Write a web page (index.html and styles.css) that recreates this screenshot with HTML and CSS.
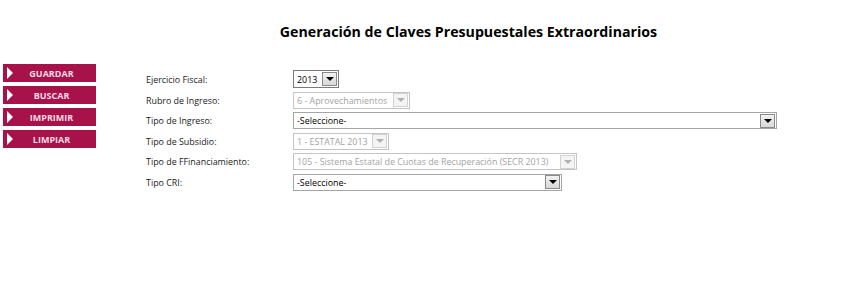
FILE: index.html
```html
<!DOCTYPE html>
<html lang="es">
<head>
    <meta charset="UTF-8">
    <title>Generación de Claves Presupuestales Extraordinarios</title>
    <link rel="stylesheet" href="styles.css">
</head>
<body>
    <div class="page">
        <!-- menu lateral -->
        <div class="menu">
            <div class="menu-btn"><span class="menu-arrow"></span><span class="menu-text">GUARDAR</span></div>
            <div class="menu-btn"><span class="menu-arrow"></span><span class="menu-text">BUSCAR</span></div>
            <div class="menu-btn"><span class="menu-arrow"></span><span class="menu-text">IMPRIMIR</span></div>
            <div class="menu-btn"><span class="menu-arrow"></span><span class="menu-text">LIMPIAR</span></div>
        </div>

        <!-- contenido -->
        <div class="main">
            <h1 class="title">Generación de Claves Presupuestales Extraordinarios</h1>
            <div class="form">
                <div class="row row-first">
                    <div class="label">Ejercicio Fiscal:</div>
                    <div class="combo combo-strong" style="width: 46px;">
                        <span class="combo-value">2013</span><span class="combo-btn"><span class="tri"></span></span>
                    </div>
                </div>
                <div class="row">
                    <div class="label">Rubro de Ingreso:</div>
                    <div class="combo disabled" style="width: 117px;">
                        <span class="combo-value">6 - Aprovechamientos</span><span class="combo-btn"><span class="tri"></span></span>
                    </div>
                </div>
                <div class="row">
                    <div class="label">Tipo de Ingreso:</div>
                    <div class="combo" style="width: 484px;">
                        <span class="combo-value">-Seleccione-</span><span class="combo-btn"><span class="tri"></span></span>
                    </div>
                </div>
                <div class="row">
                    <div class="label">Tipo de Subsidio:</div>
                    <div class="combo disabled" style="width: 96px;">
                        <span class="combo-value">1 - ESTATAL 2013</span><span class="combo-btn"><span class="tri"></span></span>
                    </div>
                </div>
                <div class="row">
                    <div class="label">Tipo de FFinanciamiento:</div>
                    <div class="combo disabled" style="width: 284px;">
                        <span class="combo-value">105 - Sistema Estatal de Cuotas de Recuperación (SECR 2013)</span><span class="combo-btn"><span class="tri"></span></span>
                    </div>
                </div>
                <div class="row">
                    <div class="label">Tipo CRI:</div>
                    <div class="combo" style="width: 269px;">
                        <span class="combo-value">-Seleccione-</span><span class="combo-btn"><span class="tri"></span></span>
                    </div>
                </div>
            </div>
        </div>
    </div>
</body>
</html>
```

FILE: styles.css
```css
/* general */
body, html {
    margin: 0;
    padding: 0;
    background-color: #fff;
    color: #000;
    font-family: "Open Sans", "DejaVu Sans", sans-serif;
}

.page {
    display: flex;
}

/* menu lateral */
.menu {
    width: 100px;
    padding: 64px 0 0 3px;
    box-sizing: border-box;
    display: flex;
    flex-direction: column;
    gap: 4px;
}

.menu-btn {
    width: 93px;
    height: 18px;
    background-color: #a8124a;
    display: flex;
    align-items: center;
}

.menu-arrow {
    width: 0;
    height: 0;
    margin-left: 4px;
    border-top: 6px solid transparent;
    border-bottom: 6px solid transparent;
    border-left: 6px solid #fff;
}

.menu-text {
    flex: 1;
    text-align: center;
    padding-right: 6px;
    color: #f3dbe4;
    font-size: 9px;
    font-weight: bold;
}

/* contenido */
.main {
    flex: 1;
}

.title {
    margin: 23px 0 0 0;
    padding-right: 10px;
    text-align: center;
    font-size: 14.2px;
    font-weight: bold;
    line-height: 18px;
}

.form {
    margin: 29px 0 0 46px;
    display: flex;
    flex-direction: column;
    gap: 3.5px;
}

.row {
    display: flex;
    align-items: center;
    height: 17px;
}

.row-first {
    height: 18px;
}

.label {
    width: 147px;
    font-size: 8.9px;
    color: #222;
}

/* combos */
.combo {
    box-sizing: border-box;
    height: 17px;
    border: 1px solid #a5a5a5;
    display: flex;
    align-items: center;
    background: #fff;
    font-size: 8.9px;
}

.combo-strong {
    height: 18px;
    border-color: #7a7a7a;
}

.combo-value {
    flex: 1;
    padding-left: 3px;
    white-space: nowrap;
    overflow: hidden;
}

.combo-btn {
    box-sizing: border-box;
    width: 15px;
    height: 14px;
    margin-right: 1px;
    border: 1px solid #8a8a8a;
    background: linear-gradient(#f2f2f2, #d8d8d8);
    display: flex;
    align-items: center;
    justify-content: center;
}

.tri {
    width: 0;
    height: 0;
    border-left: 4px solid transparent;
    border-right: 4px solid transparent;
    border-top: 4px solid #000;
}

.combo.disabled {
    border-color: #c4c4c4;
    color: #a3a3a3;
}

.combo.disabled .combo-btn {
    border-color: #d2d2d2;
    background: #f4f4f4;
}

.combo.disabled .tri {
    border-top-color: #b0b0b0;
}
```
